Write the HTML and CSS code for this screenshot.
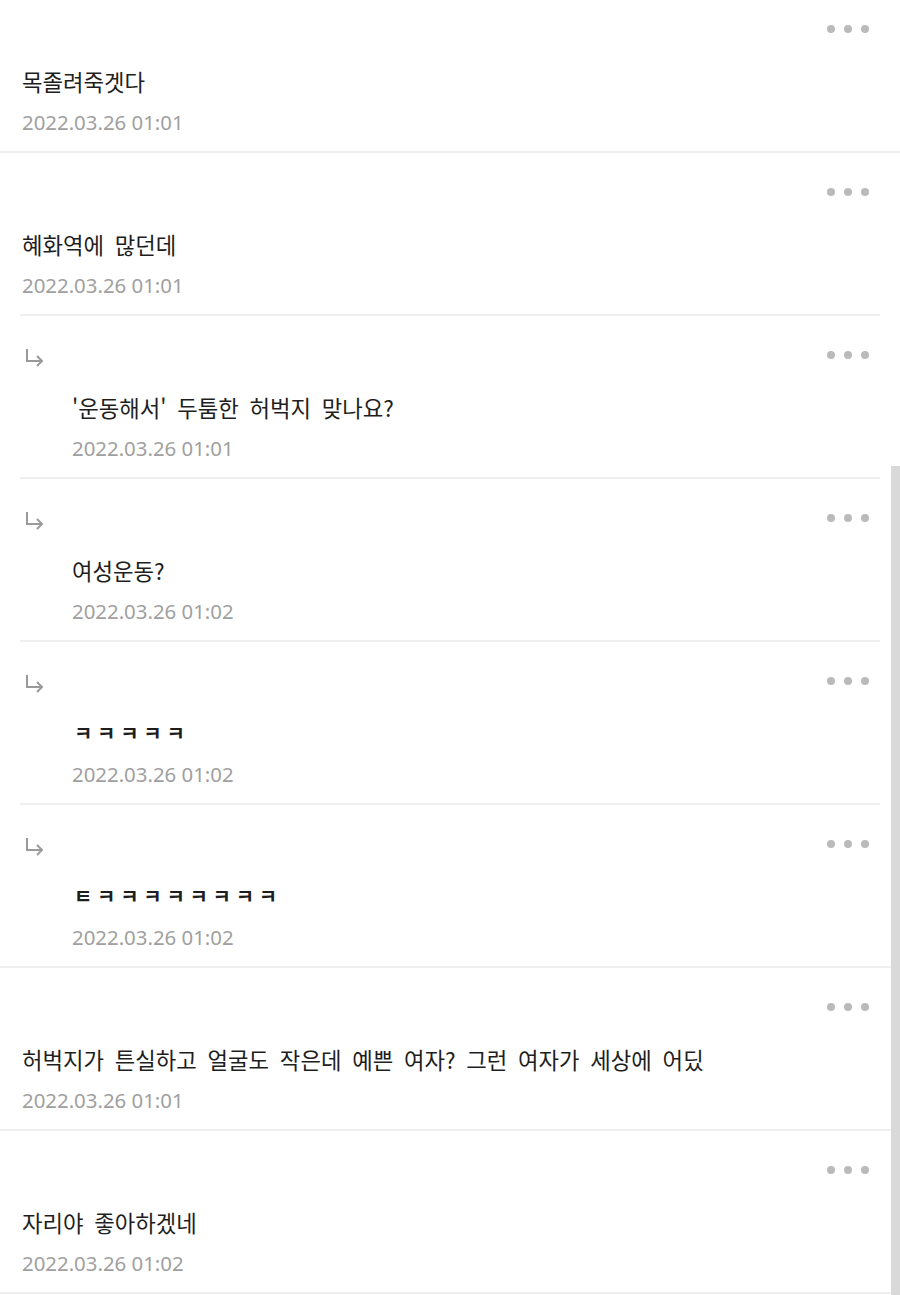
FILE: index.html
```html
<!DOCTYPE html>
<html lang="ko">
<head>
<meta charset="utf-8">
<link rel="stylesheet" href="styles.css">
</head>
<body>
<div class="list">
  <div class="item full">
    <div class="head"><span class="who"></span><span class="more"><i></i><i></i><i></i></span></div>
    <p class="text">목졸려죽겟다</p>
    <p class="date">2022.03.26 01:01</p>
  </div>
  <div class="item inset">
    <div class="head"><span class="who"></span><span class="more"><i></i><i></i><i></i></span></div>
    <p class="text">혜화역에 많던데</p>
    <p class="date">2022.03.26 01:01</p>
  </div>
  <div class="item reply inset">
    <div class="head"><svg class="arrow" width="22" height="20" viewBox="0 0 22 20"><path d="M3 2 V14 H18 M13 9 L18 14 L13 19" fill="none" stroke="#9a9a9a" stroke-width="2"/></svg><span class="more"><i></i><i></i><i></i></span></div>
    <p class="text">'운동해서' 두툼한 허벅지 맞나요?</p>
    <p class="date">2022.03.26 01:01</p>
  </div>
  <div class="item reply inset">
    <div class="head"><svg class="arrow" width="22" height="20" viewBox="0 0 22 20"><path d="M3 2 V14 H18 M13 9 L18 14 L13 19" fill="none" stroke="#9a9a9a" stroke-width="2"/></svg><span class="more"><i></i><i></i><i></i></span></div>
    <p class="text">여성운동?</p>
    <p class="date">2022.03.26 01:02</p>
  </div>
  <div class="item reply inset">
    <div class="head"><svg class="arrow" width="22" height="20" viewBox="0 0 22 20"><path d="M3 2 V14 H18 M13 9 L18 14 L13 19" fill="none" stroke="#9a9a9a" stroke-width="2"/></svg><span class="more"><i></i><i></i><i></i></span></div>
    <p class="text small">ㅋㅋㅋㅋㅋ</p>
    <p class="date">2022.03.26 01:02</p>
  </div>
  <div class="item reply full">
    <div class="head"><svg class="arrow" width="22" height="20" viewBox="0 0 22 20"><path d="M3 2 V14 H18 M13 9 L18 14 L13 19" fill="none" stroke="#9a9a9a" stroke-width="2"/></svg><span class="more"><i></i><i></i><i></i></span></div>
    <p class="text small">ㅌㅋㅋㅋㅋㅋㅋㅋㅋ</p>
    <p class="date">2022.03.26 01:02</p>
  </div>
  <div class="item full">
    <div class="head"><span class="who"></span><span class="more"><i></i><i></i><i></i></span></div>
    <p class="text">허벅지가 튼실하고 얼굴도 작은데 예쁜 여자? 그런 여자가 세상에 어딨</p>
    <p class="date">2022.03.26 01:01</p>
  </div>
  <div class="item full">
    <div class="head"><span class="who"></span><span class="more"><i></i><i></i><i></i></span></div>
    <p class="text">자리야 좋아하겠네</p>
    <p class="date">2022.03.26 01:02</p>
  </div>
</div>
<div class="scrollbar"></div>
</body>
</html>
```

FILE: styles.css
```css
html, body {
  margin: 0;
  padding: 0;
  background: #fff;
}
body {
  width: 900px;
  height: 1295px;
  overflow: hidden;
  position: relative;
  font-family: "Noto Sans CJK KR", "Noto Sans", sans-serif;
}
.list {
  margin-top: -10px;
  display: flex;
  flex-direction: column;
}
.item {
  position: relative;
  padding: 24px 31px 16px 22px;
  display: flex;
  flex-direction: column;
  border-bottom: 2px solid transparent;
}
.item.full {
  border-bottom-color: #efefef;
}
.item.inset::after {
  content: "";
  position: absolute;
  left: 20px;
  right: 20px;
  bottom: -2px;
  height: 2px;
  background: #efefef;
}
.head {
  height: 30px;
  display: flex;
  align-items: center;
  justify-content: space-between;
}
.arrow {
  margin-left: 2px;
  margin-top: 4px;
}
.more {
  display: flex;
  gap: 9px;
  margin-left: auto;
}
.more i {
  width: 8px;
  height: 8px;
  border-radius: 50%;
  background: #bababa;
}
.text {
  margin: 22px 0 0;
  height: 30px;
  line-height: 30px;
  font-size: 22.3px;
  word-spacing: 4.5px;
  color: #1e1e1e;
  white-space: nowrap;
}
.text.small {
  font-size: 20px;
  letter-spacing: 4.7px;
  font-weight: 700;
  word-spacing: 0;
  padding-left: 2px;
}
.date {
  margin: 13px 0 0;
  height: 26px;
  line-height: 26px;
  font-family: "Noto Sans", sans-serif;
  font-size: 20.4px;
  letter-spacing: 0;
  color: #a0a0a0;
}
.reply .text,
.reply .date {
  margin-left: 50px;
}
.scrollbar {
  position: absolute;
  right: 0;
  top: 466px;
  width: 9px;
  height: 829px;
  background: #d9d9d9;
}
```
